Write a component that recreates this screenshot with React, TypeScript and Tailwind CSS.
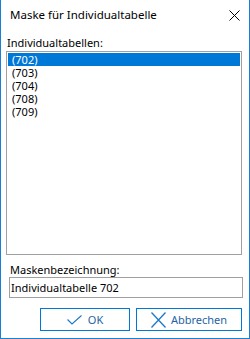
import React from 'react';

const items = ['(702)', '(703)', '(704)', '(708)', '(709)'];

const App: React.FC = () => {
  return (
    <div className="w-[250px] h-[339px] bg-white border-x border-b border-[#1a80d6] flex flex-col font-['Noto_Sans',sans-serif] text-[11px] text-black">
      {/* Title bar */}
      <div className="h-[30px] flex items-center justify-between pl-[9px] pr-[9px] shrink-0">
        <span className="text-[11.5px] leading-[14px]">Maske für Individualtabelle</span>
        <svg width="11" height="11" viewBox="0 0 11 11" className="text-black">
          <path d="M0.5 0.5 L10.5 10.5 M10.5 0.5 L0.5 10.5" stroke="currentColor" strokeWidth="1" />
        </svg>
      </div>

      {/* List */}
      <div className="mt-[6px] ml-[6px] leading-[14px] h-[14px]">Individualtabellen:</div>
      <div className="mt-px ml-[5px] w-[236px] h-[204px] border border-[#a0a0a0] p-px">
        {items.map((it, i) => (
          <div
            key={it}
            className={
              i === 0
                ? 'h-[13px] leading-[13px] pl-[4px] bg-[#0078d7] text-white'
                : 'h-[13px] leading-[13px] pl-[4px]'
            }
          >
            {it}
          </div>
        ))}
      </div>

      {/* Name */}
      <div className="mt-[8px] ml-[9px] leading-[14px] h-[14px]">Maskenbezeichnung:</div>
      <div className="ml-[8px] w-[234px] h-[21px] border border-[#a0a0a0] flex items-center pl-px">
        <span className="leading-[14px]">Individualtabelle 702</span>
      </div>

      {/* Buttons */}
      <div className="mt-[10px] ml-[39px] flex gap-[6px]">
        <button className="w-[90px] h-[23px] border border-[#0078d7] flex items-center justify-center gap-[6px] text-[#2563a6]">
          <svg width="15" height="10" viewBox="0 0 15 10">
            <path d="M0.5 4.5 L5 9 L14.5 0.5" fill="none" stroke="#1a78c8" strokeWidth="1.1" />
          </svg>
          <span className="leading-[14px]">OK</span>
        </button>
        <button className="w-[106px] h-[23px] border border-[#0078d7] flex items-center justify-center gap-[5px] text-[#2563a6]">
          <svg width="15" height="16" viewBox="0 0 15 16">
            <path d="M0.5 0.5 L14.5 15.5 M14.5 0.5 L0.5 15.5" fill="none" stroke="#1a78c8" strokeWidth="1.3" />
          </svg>
          <span className="leading-[14px]">Abbrechen</span>
        </button>
      </div>
    </div>
  );
};

export default App;
